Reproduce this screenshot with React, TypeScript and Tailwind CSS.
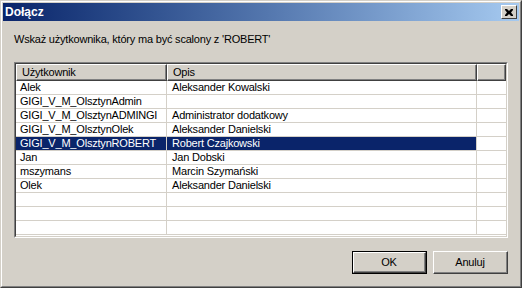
const rows: [string, string][] = [
  ["Alek", "Aleksander Kowalski"],
  ["GIGI_V_M_OlsztynAdmin", ""],
  ["GIGI_V_M_OlsztynADMINGI", "Administrator dodatkowy"],
  ["GIGI_V_M_OlsztynOlek", "Aleksander Danielski"],
  ["GIGI_V_M_OlsztynROBERT", "Robert Czajkowski"],
  ["Jan", "Jan Dobski"],
  ["mszymans", "Marcin Szymański"],
  ["Olek", "Aleksander Danielski"],
  ["", ""],
  ["", ""],
  ["", ""],
];

const SELECTED = 4;

function HeaderCell({ label, className }: { label: string; className: string }) {
  return (
    <div className={`h-full border-t border-l border-t-white border-l-white border-r border-b border-r-[#404040] border-b-[#404040] ${className}`}>
      <div className="h-full border-r border-b border-r-[#808080] border-b-[#808080] pl-[5px] leading-[14px]">
        {label}
      </div>
    </div>
  );
}

function Button({ label, isDefault }: { label: string; isDefault?: boolean }) {
  return (
    <div className={`w-[75px] h-[23px] ${isDefault ? "border border-black" : ""}`}>
      <div className="w-full h-full border-t border-l border-t-white border-l-white border-r border-b border-r-[#404040] border-b-[#404040]">
        <div className="w-full h-full border-r border-b border-r-[#808080] border-b-[#808080] flex items-center justify-center">
          {label}
        </div>
      </div>
    </div>
  );
}

export default function App() {
  return (
    <div
      className="w-[522px] h-[288px] bg-[#d4d0c8] text-[11px] tracking-[-0.2px] text-black border-t border-l border-t-[#d4d0c8] border-l-[#d4d0c8] border-r border-b border-r-[#404040] border-b-[#404040]"
      style={{ fontFamily: '"Liberation Sans", Arial, sans-serif' }}
    >
      <div className="w-full h-full border-t border-l border-t-white border-l-white border-r border-b border-r-[#808080] border-b-[#808080] p-px flex flex-col">
        {/* title bar */}
        <div className="h-[18px] flex items-center justify-between bg-gradient-to-r from-[#0a246a] to-[#a6caf0] pl-[2px] pr-[2px]">
          <span className="text-white font-bold text-[12px] tracking-normal leading-none">Dołącz</span>
          <div className="w-[16px] h-[14px] bg-[#d4d0c8] border-t border-l border-t-white border-l-white border-r border-b border-r-[#404040] border-b-[#404040] flex items-center justify-center">
            <svg width="8" height="7" viewBox="0 0 8 7">
              <path d="M0 0h2l2 2 2-2h2v1L6 3.5 8 6v1H6L4 5 2 7H0V6l2-2.5L0 1z" fill="black" />
            </svg>
          </div>
        </div>

        {/* body */}
        <div className="flex-1 flex flex-col px-[11px]">
          <div className="mt-[12px] h-[13px] leading-[13px]">
            Wskaż użytkownika, który ma być scalony z &apos;ROBERT&apos;
          </div>

          <div className="mt-[16px] w-[494px] h-[176px] border-t border-l border-t-[#808080] border-l-[#808080] border-r border-b border-r-white border-b-white">
            <div className="w-full h-full border-t border-l border-t-[#404040] border-l-[#404040] border-r border-b border-r-[#d4d0c8] border-b-[#d4d0c8] bg-white overflow-hidden">
              <div className="flex h-[17px] bg-[#d4d0c8]">
                <HeaderCell label="Użytkownik" className="w-[151px]" />
                <HeaderCell label="Opis" className="w-[310px]" />
                <HeaderCell label="" className="flex-1" />
              </div>
              {rows.map(([user, desc], i) => {
                const sel = i === SELECTED;
                return (
                  <div key={i} className="flex h-[14px] border-b border-b-[#d4d0c8] leading-[13px]">
                    <div className={`w-[151px] border-r border-r-[#d4d0c8] pl-[4px] whitespace-nowrap ${sel ? "bg-[#0a246a] text-white" : ""}`}>
                      {user}
                    </div>
                    <div className={`w-[310px] border-r border-r-[#d4d0c8] pl-[5px] whitespace-nowrap ${sel ? "bg-[#0a246a] text-white" : ""}`}>
                      {desc}
                    </div>
                    <div className="flex-1" />
                  </div>
                );
              })}
            </div>
          </div>

          <div className="mt-[13px] flex justify-end gap-[6px]">
            <Button label="OK" isDefault />
            <Button label="Anuluj" />
          </div>
        </div>
      </div>
    </div>
  );
}
